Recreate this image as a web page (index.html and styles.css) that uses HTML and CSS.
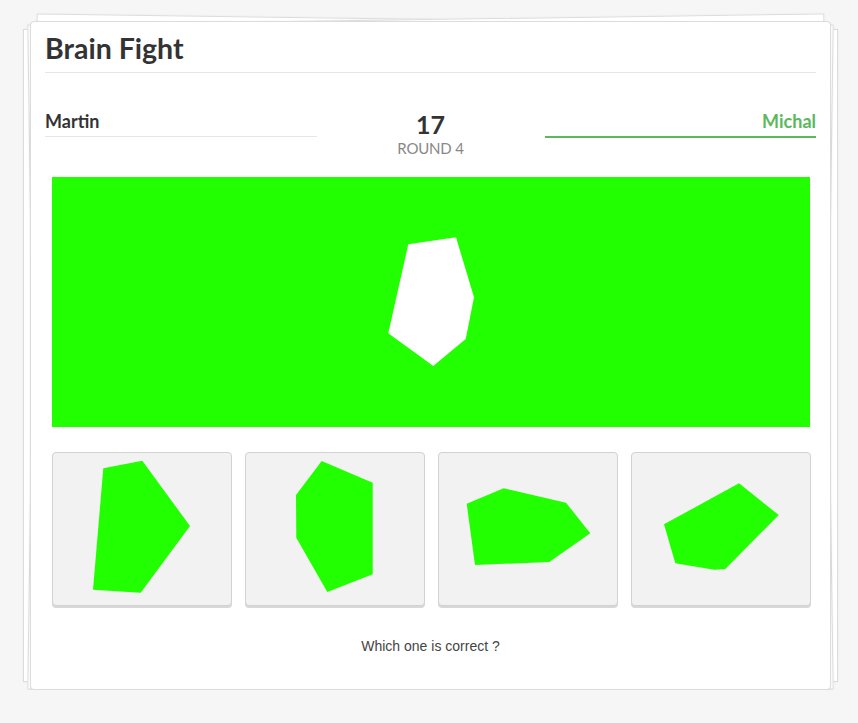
FILE: index.html
```html
<!DOCTYPE html>
<html lang="en">
<head>
<meta charset="utf-8">
<title>Brain Fight</title>
<link rel="stylesheet" href="styles.css">
</head>
<body>
<div class="stack">
  <div class="sheet sheet-a"></div>
  <div class="sheet sheet-b sheet-b1"></div>
  <div class="sheet sheet-b sheet-b2"></div>
  <main class="card">
    <h1 class="title">Brain Fight</h1>
    <section class="players">
      <div class="player player-left">Martin</div>
      <div class="score">
        <div class="score-num">17</div>
        <div class="score-round">Round 4</div>
      </div>
      <div class="player player-right">Michal</div>
    </section>
    <div class="board">
      <svg class="board-svg" width="758" height="250" viewBox="0 0 758 250">
        <rect width="758" height="250" fill="#22ff00"/>
        <polygon points="356.3,67.3 404,60.3 422,120.3 413.7,162 381.3,189 336.3,156.3" fill="#ffffff"/>
      </svg>
    </div>
    <div class="options">
      <button class="option" type="button">
        <svg class="option-svg" viewBox="1 1 178 152"><polygon points="51.3,16.3 90.3,8.7 138,74 88.7,140.7 41,137.7" fill="#22ff00"/></svg>
      </button>
      <button class="option" type="button">
        <svg class="option-svg" viewBox="1 1 178 152"><polygon points="76.7,9 127.7,30.7 127.7,122.3 82.3,140 51.3,85.7 51,43" fill="#22ff00"/></svg>
      </button>
      <button class="option" type="button">
        <svg class="option-svg" viewBox="1 1 178 152"><polygon points="65.7,36.3 128,50.7 152.3,81.3 111.3,110 37,113 28.7,51.7" fill="#22ff00"/></svg>
      </button>
      <button class="option" type="button">
        <svg class="option-svg" viewBox="1 1 178 152"><polygon points="108,31.3 147.7,63 94.3,117 83.3,117.7 44.3,111.3 33,72.3" fill="#22ff00"/></svg>
      </button>
    </div>
    <p class="question">Which one is correct ?</p>
  </main>
</div>
</body>
</html>
```

FILE: styles.css
```css
html, body {
  margin: 0;
  padding: 0;
}
body {
  background: #f6f6f6;
  font-family: Lato, "Open Sans", sans-serif;
  color: #333;
}
.stack {
  position: relative;
  width: 801px;
  margin: 21px 0 0 30px;
}
.sheet {
  position: absolute;
  background: #fff;
  border: 1px solid #dcdcdc;
  box-shadow: 0 0 2px rgba(0, 0, 0, 0.06);
  z-index: 0;
}
.sheet-a {
  left: -7px;
  right: -7px;
  top: 8px;
  bottom: 8px;
}
.sheet-b {
  left: 2px;
  right: 2px;
  top: -2px;
  bottom: -5px;
}
.sheet-b1 {
  transform: rotate(0.8deg);
}
.sheet-b2 {
  transform: rotate(-0.8deg);
}
.card {
  position: relative;
  z-index: 1;
  display: block;
  box-sizing: border-box;
  width: 801px;
  background: #fff;
  border: 1px solid #dcdcdc;
  border-radius: 4px;
  padding: 0 14px 33px;
  box-shadow: 0 1px 2px rgba(0, 0, 0, 0.08);
}
.title {
  margin: 9px 0 0;
  font-size: 28.5px;
  line-height: 34px;
  font-weight: 700;
  color: #333;
  padding-bottom: 7px;
  border-bottom: 1px solid #e6e6e6;
}
.players {
  display: grid;
  grid-template-columns: 1fr 228px 1fr;
  align-items: start;
  margin-top: 37px;
}
.player {
  font-size: 18px;
  line-height: 22px;
  font-weight: 700;
  padding-bottom: 4px;
}
.player-left {
  color: #333;
  border-bottom: 1px solid #e6e6e6;
}
.player-right {
  color: #5cb85c;
  text-align: right;
  border-bottom: 2px solid #5cb85c;
}
.score {
  text-align: center;
}
.score-num {
  font-size: 25px;
  line-height: 28px;
  font-weight: 700;
  color: #333;
}
.score-round {
  margin-top: 1px;
  font-size: 15px;
  line-height: 18px;
  font-weight: 400;
  color: #888;
  text-transform: uppercase;
  letter-spacing: -0.2px;
}
.board {
  margin: 20px 0 0 7px;
  width: 758px;
  height: 250px;
}
.board-svg {
  display: block;
}
.options {
  display: grid;
  grid-template-columns: repeat(4, 180px);
  column-gap: 13px;
  margin: 25px 0 0 7px;
}
.option {
  display: block;
  box-sizing: border-box;
  width: 180px;
  height: 154px;
  padding: 0;
  margin: 0;
  background: #f2f2f2;
  border: 1px solid #d2d2d2;
  border-radius: 4px;
  box-shadow: 0 2px 0 #d8d8d8;
  cursor: pointer;
}
.option-svg {
  display: block;
  width: 178px;
  height: 152px;
}
.question {
  margin: 30px 0 0;
  font-family: "Liberation Sans", Arial, sans-serif;
  font-size: 14px;
  line-height: 20px;
  color: #444;
  text-align: center;
}
```
